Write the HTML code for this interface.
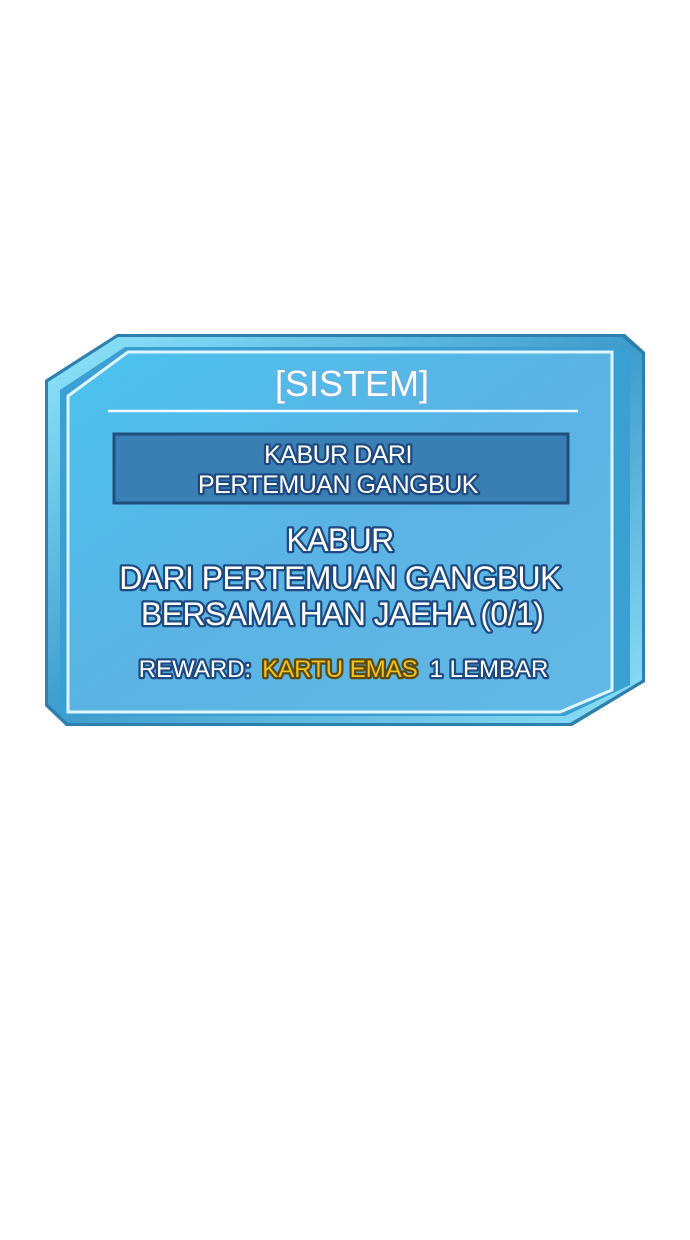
<!DOCTYPE html>
<html><head><style>
html,body{margin:0;padding:0;background:#fff;}
svg{display:block}
text{font-family:"Liberation Sans",sans-serif;paint-order:stroke;stroke-linejoin:round;text-anchor:middle;}
</style></head><body>
<svg width="690" height="1240" viewBox="0 0 690 1240">
<defs>
<linearGradient id="bg" x1="0" y1="0" x2="1" y2="1">
<stop offset="0" stop-color="#4cc2ef"/><stop offset="0.5" stop-color="#5ab3e3"/><stop offset="1" stop-color="#63b9e6"/>
</linearGradient>
<linearGradient id="fr" x1="0" y1="0" x2="1" y2="1">
<stop offset="0" stop-color="#8fe6fb"/><stop offset="0.5" stop-color="#3d9ccc"/><stop offset="1" stop-color="#8ee0f7"/>
</linearGradient>
</defs>
<polygon points="45,380 117,334 625,334 645,352 645,682 572,726 66,726 45,706" fill="#2d7fae"/>
<polygon points="48,382 118,337 622,337 642,354 642,680 570,723 68,723 48,704" fill="url(#fr)"/>
<polygon points="60,390 125,347 618,347 630,358 630,685 565,716 62,716 60,712" fill="#3a9fd2"/>
<polygon points="68,396 128,352 612,352 612,690 560,712 68,712" fill="url(#bg)" stroke="#dff6ff" stroke-width="3"/>
<line x1="108" y1="411" x2="578" y2="411" stroke="#f2fbff" stroke-width="2.5"/>
<rect x="114" y="434" width="454" height="69" fill="#3a7fb4" stroke="#1e4f7c" stroke-width="3"/>
<g fill="#fff" stroke="#1d4a80" stroke-width="4.5">
<text x="352" y="396" font-size="36" fill="#fff" stroke="#6aaee0" stroke-width="2">[SISTEM]</text>
<text x="338" y="463" font-size="25" letter-spacing="-0.5">KABUR DARI</text>
<text x="338" y="493" font-size="25" letter-spacing="-0.5">PERTEMUAN GANGBUK</text>
<text x="340" y="551" font-size="32" letter-spacing="-0.6">KABUR</text>
<text x="340" y="589" font-size="32" letter-spacing="-0.6">DARI PERTEMUAN GANGBUK</text>
<text x="342" y="625" font-size="32" letter-spacing="-0.6">BERSAMA HAN JAEHA (0/1)</text>
<text x="195" y="677" font-size="24">REWARD:</text>
<text x="340" y="677" font-size="24" fill="#f2c21c" stroke="#5a4a10">KARTU EMAS</text>
<text x="489" y="677" font-size="24">1 LEMBAR</text>
</g>
</svg>
</body></html>
